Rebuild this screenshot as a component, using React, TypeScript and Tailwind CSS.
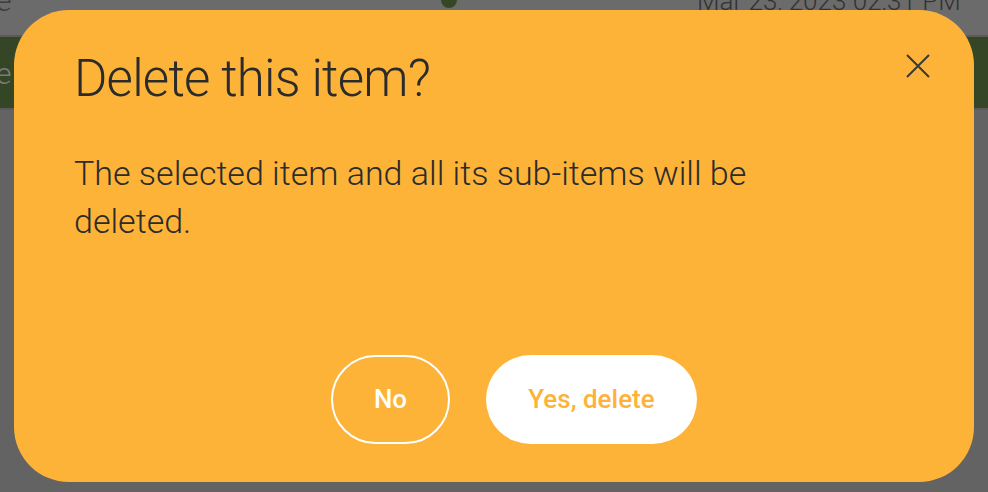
export default function App() {
  return (
    <div
      className="relative w-[988px] h-[492px] overflow-hidden bg-[#636363]"
      style={{ fontFamily: "Roboto, 'Liberation Sans', sans-serif" }}
    >
      {/* dimmed page behind the dialog */}
      <div className="flex flex-col">
        <div className="relative h-[35px] bg-[#6b6b6b]">
          <span className="absolute left-[-4px] top-[-22px] whitespace-nowrap text-[30px] font-light text-[#3e3e3e]">
            e
          </span>
          <span className="absolute left-[441px] top-[-8px] w-[16px] h-[16px] rounded-full bg-[#354625]" />
          <span className="absolute left-[697px] top-[-18px] whitespace-nowrap text-[26px] font-light text-[#333333]">
            Mar 23, 2023 02:31 PM
          </span>
        </div>
        <div className="h-[2px] bg-[#5a5a5a]" />
        <div className="relative h-[71px] bg-[#354627]">
          <span className="absolute left-[-4px] top-[14px] whitespace-nowrap text-[30px] font-light text-[#7b7b7b]">
            e
          </span>
        </div>
        <div className="h-[2px] bg-[#5a5a5a]" />
      </div>

      {/* dialog */}
      <div className="absolute left-[14px] top-[10px] w-[960px] h-[472px] rounded-[55px] bg-[#fdb338] flex flex-col pl-[60px] pr-[44px]">
        <div className="flex items-start justify-between pt-[37px]">
          <h2 className="text-[51px] leading-[64px] font-light text-[#2b2b2b] tracking-[-0.8px]">
            Delete this item?
          </h2>
          <button className="mt-[7px] text-[#3a3a3a]">
            <svg width="24" height="24" viewBox="0 0 24 24" fill="none" stroke="currentColor" strokeWidth="2">
              <path d="M1 1 L23 23 M23 1 L1 23" />
            </svg>
          </button>
        </div>
        <p className="mt-[38px] w-[720px] text-[34px] leading-[48px] font-light text-[#2b2b2b]">
          The selected item and all its sub-items will be deleted.
        </p>
        <div className="mt-auto mb-[38px] flex gap-[36px] pl-[257px]">
          <button className="w-[119px] h-[89px] rounded-full border-2 border-white text-white text-[26px] font-medium">
            No
          </button>
          <button className="w-[211px] h-[89px] rounded-full bg-white text-[#fdb338] text-[26px] font-medium">
            Yes, delete
          </button>
        </div>
      </div>
    </div>
  );
}
